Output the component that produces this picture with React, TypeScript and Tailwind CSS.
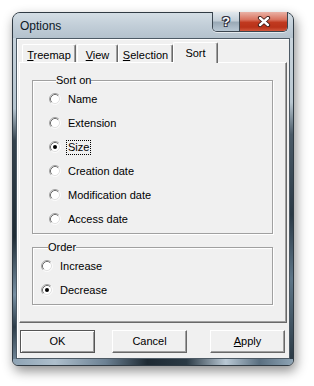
import React from 'react';

const ui = "font-['Liberation_Sans',Arial,sans-serif]";

function Radio({ checked }: { checked?: boolean }) {
  return (
    <svg width="12" height="12" viewBox="0 0 12 12" className="shrink-0">
      <circle cx="6" cy="6" r="5" fill="#fff" />
      <path d="M2.11 9.89A5.5 5.5 0 0 1 9.89 2.11" fill="none" stroke="#a3a3a3" />
      <path d="M9.89 2.11A5.5 5.5 0 0 1 2.11 9.89" fill="none" stroke="#fcfcfc" />
      <path d="M2.82 9.18A4.5 4.5 0 0 1 9.18 2.82" fill="none" stroke="#707070" />
      <path d="M9.18 2.82A4.5 4.5 0 0 1 2.82 9.18" fill="none" stroke="#e2e2e2" />
      {checked && <circle cx="6" cy="6" r="2" fill="#000" />}
    </svg>
  );
}

function RadioRow({ label, checked, focus }: { label: string; checked?: boolean; focus?: boolean }) {
  return (
    <div className="flex h-[24px] items-center gap-[5px]">
      <Radio checked={checked} />
      <span className={focus ? 'border border-dotted border-black px-[1px] leading-[13px]' : 'px-[2px] leading-[15px]'}>{label}</span>
    </div>
  );
}

function Tab({ children, w, selected }: { children: React.ReactNode; w: string; selected?: boolean }) {
  if (selected) {
    return (
      <div className={`relative z-10 -mb-[1px] flex h-[21px] ${w} justify-center rounded-t-[2px] border-l border-t border-r border-l-white border-t-white border-r-[#696969] bg-[#f0f0f0] pt-[2px] shadow-[inset_-1px_0_0_#a0a0a0]`}>
        {children}
      </div>
    );
  }
  return (
    <div className={`flex h-[18px] ${w} justify-center rounded-t-[2px] border-l border-t border-r border-l-white border-t-white border-r-[#696969] bg-[#f0f0f0] pt-[2px] shadow-[inset_-1px_0_0_#a0a0a0]`}>
      {children}
    </div>
  );
}

function Btn({ children, def }: { children: React.ReactNode; def?: boolean }) {
  return (
    <div
      className={
        def
          ? 'flex h-[23px] w-[75px] items-center justify-center border border-[#555] bg-[#f0f0f0] shadow-[inset_1px_1px_0_#fff,inset_-1px_-1px_0_#9a9a9a]'
          : 'flex h-[23px] w-[75px] items-center justify-center border border-t-white border-l-white border-r-[#696969] border-b-[#696969] bg-[#f0f0f0] shadow-[inset_-1px_-1px_0_#a0a0a0]'
      }
    >
      {children}
    </div>
  );
}

export default function App() {
  return (
    <div className={`h-[386px] w-[314px] overflow-hidden bg-white pl-[12px] pt-[12px] ${ui}`}>
      <div className="flex h-[354px] w-[282px] flex-col rounded-t-[8px] rounded-b-[6px] border border-[#2f3a43] bg-[#b9c6d0] shadow-[2px_5px_12px_rgba(0,0,0,0.45)]">
        {/* title bar */}
        <div className="flex h-[25px] items-start rounded-t-[7px] bg-[linear-gradient(180deg,#d3dde4_0%,#c2ced8_50%,#b4c2cd_100%)] pl-[7px]">
          <span className="mt-[6px] text-[12px] leading-[14px] text-[#0c1926]">Options</span>
          <div className="ml-auto mr-[5px] -mt-[1px] flex h-[20px] overflow-hidden rounded-b-[5px] border border-t-0 border-[#3b4650] shadow-[0_1px_0_rgba(255,255,255,0.6)]">
            <div className="flex w-[27px] items-center justify-center border-r border-[#3b4650] bg-[linear-gradient(180deg,#e2e8ed_0%,#c3ced7_45%,#9aaab7_55%,#b8c7d3_100%)]">
              <span className="text-[13px] font-bold leading-[13px] text-white [text-shadow:0_0_1px_#223,1px_1px_0_#334,-1px_-1px_0_#334,1px_-1px_0_#334,-1px_1px_0_#334]">?</span>
            </div>
            <div className="flex w-[47px] items-center justify-center bg-[linear-gradient(180deg,#eab2a6_0%,#d9735f_40%,#c0391f_55%,#b93219_80%,#d2573c_100%)]">
              <svg width="14" height="11" viewBox="0 0 14 11">
                <path d="M3 2L11 9M11 2L3 9" stroke="#3a1a16" strokeWidth="4.2" strokeLinecap="round" />
                <path d="M3 2L11 9M11 2L3 9" stroke="#fff" strokeWidth="2.4" strokeLinecap="round" />
              </svg>
            </div>
          </div>
        </div>

        {/* middle */}
        <div className="flex h-[321px]">
          <div className="w-[3px] bg-[linear-gradient(180deg,#c6d2db_0%,#b5c4cf_22%,#34424d_32%,#1f2c35_62%,#7890a3_80%,#2c3c48_90%,#6e8394_100%)]" />
          <div className="flex w-[274px] flex-col border border-[#4d5a65] bg-[#f0f0f0] text-[11px] text-black shadow-[inset_1px_1px_0_#fff]">
            {/* tab control */}
            <div className="ml-[2px] mt-[3px] w-[268px]">
              <div className="flex h-[20px] items-end pl-[3px]">
                <Tab w="w-[54px]">
                  <span><span className="underline">T</span>reemap</span>
                </Tab>
                <div className="w-[1px]" />
                <Tab w="w-[41px]">
                  <span><span className="underline">V</span>iew</span>
                </Tab>
                <Tab w="w-[55px]">
                  <span><span className="underline">S</span>election</span>
                </Tab>
                <Tab w="w-[45px]" selected>
                  <span>Sort</span>
                </Tab>
              </div>
              <div className="h-[261px] border border-l-white border-t-white border-r-[#696969] border-b-[#696969] pl-[12px] pt-[11px] shadow-[inset_-1px_-1px_0_#a0a0a0]">
                <fieldset className="w-[241px] border border-[#a0a0a0] pb-[2px] pl-[16px] pt-0 shadow-[inset_1px_1px_0_#fff,1px_1px_0_#fff]">
                  <legend className="ml-[7px] bg-[#f0f0f0] leading-[13px]">Sort on</legend>
                  <RadioRow label="Name" />
                  <RadioRow label="Extension" />
                  <RadioRow label="Size" checked focus />
                  <RadioRow label="Creation date" />
                  <RadioRow label="Modification date" />
                  <RadioRow label="Access date" />
                </fieldset>
                <fieldset className="mt-[7px] w-[241px] border border-[#a0a0a0] pb-[2px] pl-[8px] pt-0 shadow-[inset_1px_1px_0_#fff,1px_1px_0_#fff]">
                  <legend className="ml-[7px] bg-[#f0f0f0] leading-[13px]">Order</legend>
                  <RadioRow label="Increase" />
                  <RadioRow label="Decrease" checked />
                </fieldset>
              </div>
            </div>
            {/* buttons */}
            <div className="ml-[3px] mt-[7px] flex">
              <Btn def>OK</Btn>
              <div className="w-[17px]" />
              <Btn>Cancel</Btn>
              <div className="w-[23px]" />
              <Btn>
                <span><span className="underline">A</span>pply</span>
              </Btn>
            </div>
          </div>
          <div className="w-[3px] bg-[linear-gradient(180deg,#c9d4dc_0%,#b9c7d1_20%,#4a5a67_30%,#2a3945_55%,#5d7587_75%,#2b3a45_100%)]" />
        </div>

        {/* bottom frame */}
        <div className="h-[6px] rounded-b-[5px] bg-[linear-gradient(90deg,#8ea3b4_0%,#aebfcc_15%,#6c8193_33%,#1e2a33_48%,#2b3a45_62%,#b9c8d4_76%,#5a6f80_88%,#8ea4b5_100%)]" />
      </div>
    </div>
  );
}
